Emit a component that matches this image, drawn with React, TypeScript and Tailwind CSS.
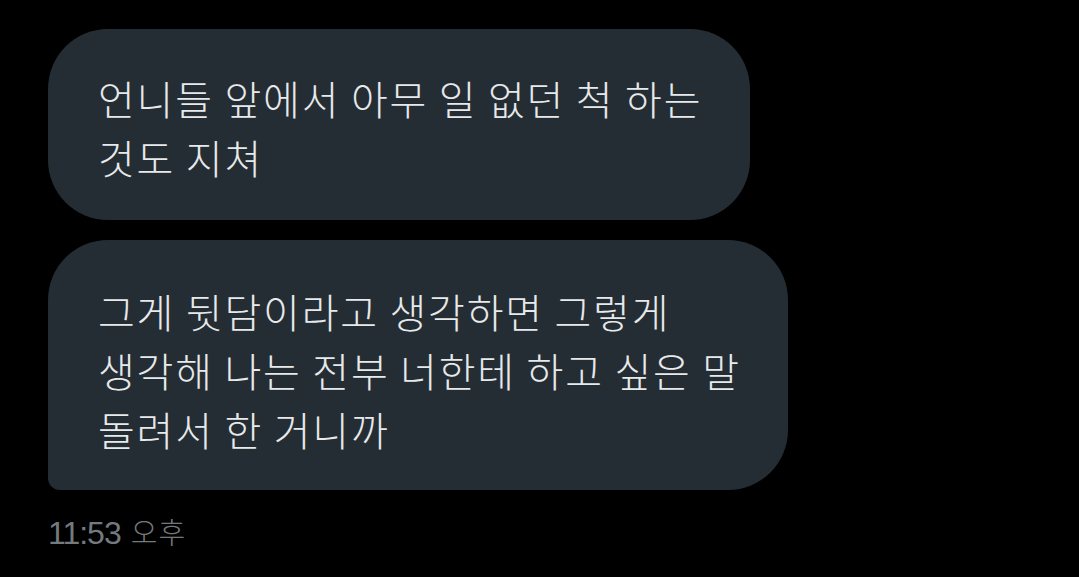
const font = {
  fontFamily: '"Noto Sans CJK KR", "Noto Sans", sans-serif',
}

type Bubble = {
  lines: string[]
  tail?: boolean
  width: string
}

const MESSAGES: Bubble[] = [
  {
    lines: ['언니들 앞에서 아무 일 없던 척 하는', '것도 지쳐'],
    width: 'w-[702px]',
  },
  {
    lines: [
      '그게 뒷담이라고 생각하면 그렇게',
      '생각해 나는 전부 너한테 하고 싶은 말',
      '돌려서 한 거니까',
    ],
    tail: true,
    width: 'w-[740px]',
  },
]

export default function App() {
  return (
    <div
      className="w-[1079px] h-[577px] bg-black overflow-hidden pl-[48px] pt-[29px] flex flex-col items-start"
      style={font}
    >
      {/* Message bubbles */}
      <div className="flex flex-col items-start gap-[20px]">
        {MESSAGES.map((msg, i) => (
          <div
            key={i}
            className={`${msg.width} bg-[#252d34] rounded-[60px] ${
              msg.tail ? 'rounded-bl-[12px] pt-[42px] pb-[31px]' : 'pt-[40px] pb-[33px]'
            } pl-[50px] text-[40px] leading-[59px] font-light text-[#e7e9ea] tracking-[1.8px] whitespace-nowrap`}
          >
            {msg.lines.map((line, j) => (
              <div key={j}>{line}</div>
            ))}
          </div>
        ))}
      </div>
      {/* Timestamp */}
      <div className="mt-[22px] flex items-baseline gap-[10px] text-[#74797e]">
        <span
          className="text-[32px] leading-[38px] tracking-[-1px]"
          style={{ fontFamily: '"Liberation Sans", Arial, sans-serif' }}
        >
          11:53
        </span>
        <span className="text-[29px] leading-[38px] font-light tracking-[1px]">오후</span>
      </div>
    </div>
  )
}
